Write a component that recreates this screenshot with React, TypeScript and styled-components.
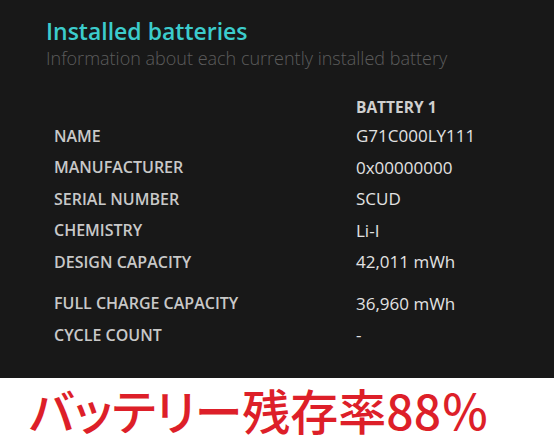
import styled, { createGlobalStyle } from 'styled-components';

const GlobalStyle = createGlobalStyle`
  html, body {
    margin: 0;
    padding: 0;
    background: #ffffff;
  }
`;

const Page = styled.div`
  width: 554px;
  height: 441px;
  display: flex;
  flex-direction: column;
  overflow: hidden;
`;

const Panel = styled.section`
  height: 378px;
  box-sizing: border-box;
  background: #181818;
  padding: 16px 0 0 46px;
  font-family: 'Open Sans', 'Noto Sans', sans-serif;
`;

const Title = styled.h1`
  margin: 0;
  font-size: 23px;
  font-weight: 600;
  line-height: 30px;
  color: #3ccccc;
`;

const Subtitle = styled.p`
  margin: 0;
  font-size: 18px;
  font-weight: 300;
  line-height: 24px;
  color: #5c5c5c;
`;

const Table = styled.div`
  display: grid;
  grid-template-columns: 302px 1fr;
  margin: 24px 0 0 8px;
`;

const Row = styled.div<{ $gap?: number }>`
  display: contents;

  & > * {
    margin-top: ${(p) => p.$gap ?? 0}px;
  }
`;

const Label = styled.div`
  height: 31.5px;
  display: flex;
  align-items: center;
  font-size: 16px;
  font-weight: 600;
  color: #c8c8c8;
`;

const Value = styled.div<{ $head?: boolean }>`
  height: ${(p) => (p.$head ? 26 : 31.5)}px;
  display: flex;
  align-items: center;
  font-size: ${(p) => (p.$head ? 15.5 : 17)}px;
  font-weight: ${(p) => (p.$head ? 700 : 400)};
  color: ${(p) => (p.$head ? '#cfcfcf' : '#e2e2e2')};
`;

const Banner = styled.div`
  flex: 1;
  display: flex;
  align-items: center;
  padding-left: 29px;
  background: #ffffff;
`;

const BannerText = styled.span`
  font-family: 'Noto Sans CJK JP', sans-serif;
  font-size: 48px;
  font-weight: 500;
  line-height: 1.2;
  color: #dd1f29;
  font-feature-settings: 'palt';
`;

const rows: { label: string; value: string; gap?: number }[] = [
  { label: 'NAME', value: 'G71C000LY111' },
  { label: 'MANUFACTURER', value: '0x00000000' },
  { label: 'SERIAL NUMBER', value: 'SCUD' },
  { label: 'CHEMISTRY', value: 'Li-I' },
  { label: 'DESIGN CAPACITY', value: '42,011 mWh' },
  { label: 'FULL CHARGE CAPACITY', value: '36,960 mWh', gap: 10 },
  { label: 'CYCLE COUNT', value: '-' },
];

export default function App() {
  return (
    <>
      <GlobalStyle />
      <Page>
        <Panel>
          <Title>Installed batteries</Title>
          <Subtitle>Information about each currently installed battery</Subtitle>
          <Table>
            <Row>
              <div />
              <Value $head>BATTERY 1</Value>
            </Row>
            {rows.map((r) => (
              <Row key={r.label} $gap={r.gap}>
                <Label>{r.label}</Label>
                <Value>{r.value}</Value>
              </Row>
            ))}
          </Table>
        </Panel>
        <Banner>
          <BannerText>バッテリー残存率88％</BannerText>
        </Banner>
      </Page>
    </>
  );
}
